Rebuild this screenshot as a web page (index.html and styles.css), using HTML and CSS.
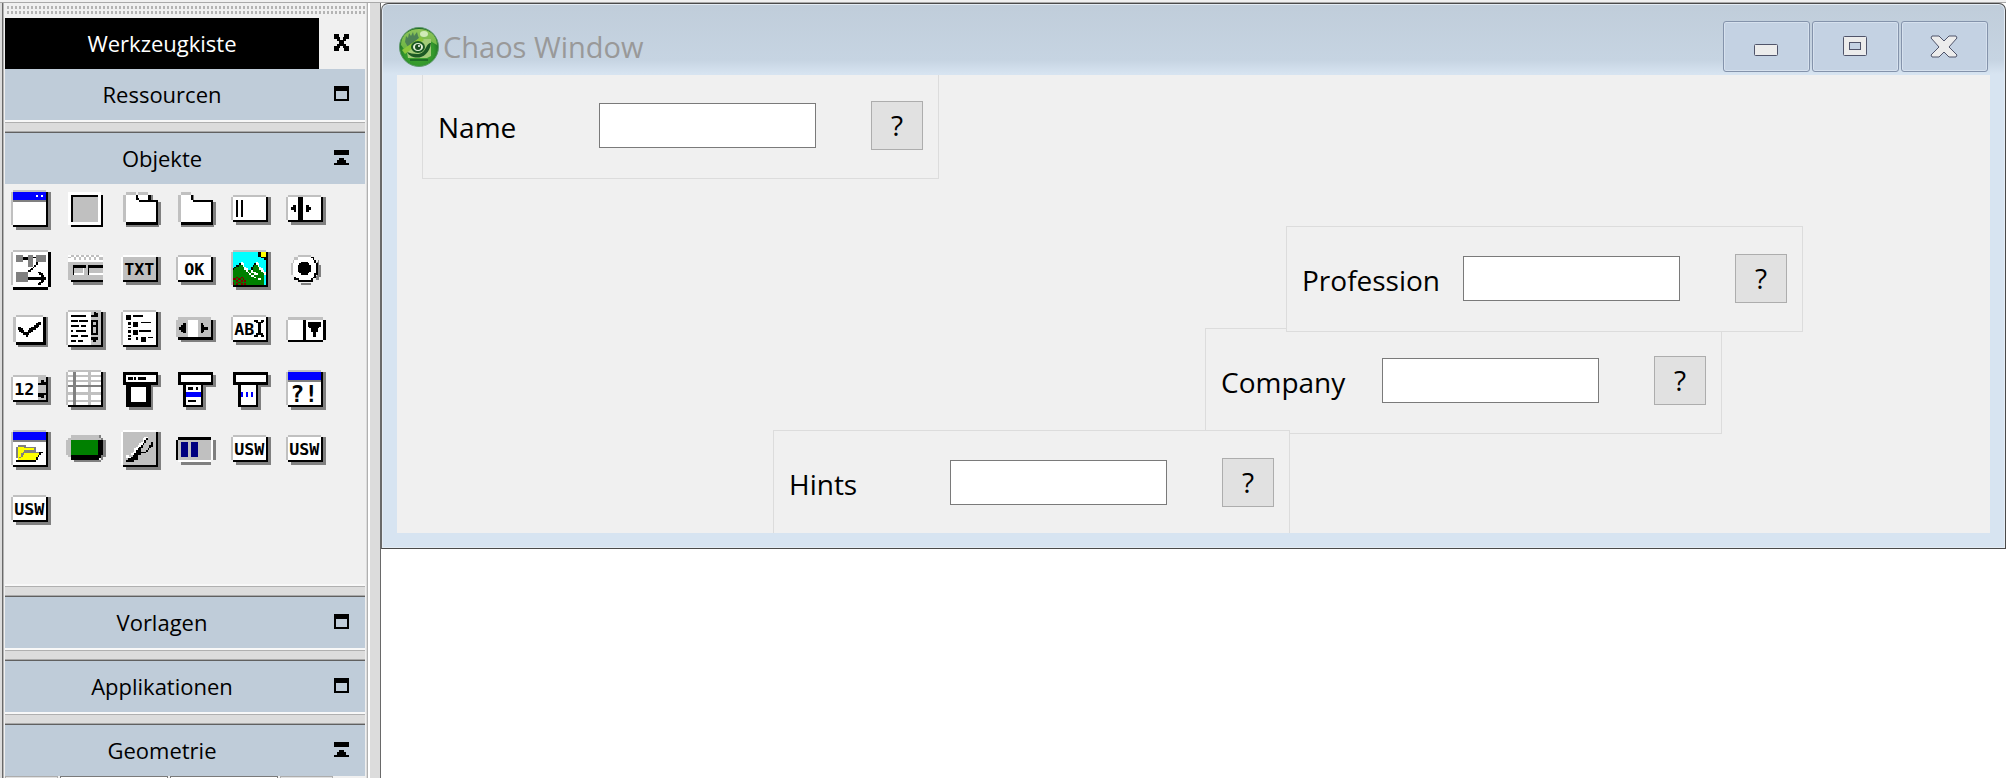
FILE: index.html
```
<!DOCTYPE html>
<html lang="de">
<head>
    <meta charset="UTF-8">
    <meta name="viewport" content="width=device-width, initial-scale=1.0">
    <title>Werkzeugkiste</title>
    <link rel="stylesheet" href="styles.css">
</head>
<body>

    <!-- Shared frames for the tool icons, 24x24 grid -->
    <svg class="sprites" aria-hidden="true">
        <symbol id="frame-square" viewBox="0 0 24 24">
            <path class="silver" d="M1 0h20v1H1zM0 1h1v20H0z"/>
            <path class="white" d="M1 1h20v20H1z"/>
            <path class="black" d="M21 1h1v21H1v-1h20z"/>
            <path class="gray" d="M22 1h2v23H3v-2h19z"/>
        </symbol>
        <symbol id="frame-wide" viewBox="0 0 24 24">
            <path class="silver" d="M1 3h20v1H1zM0 4h1v14H0z"/>
            <path class="white" d="M1 4h20v14H1z"/>
            <path class="black" d="M21 4h1v15H1v-1h20z"/>
            <path class="gray" d="M22 4h2v17H3v-2h19z"/>
        </symbol>
        <symbol id="frame-window" viewBox="0 0 24 24">
            <use href="#frame-square"/>
            <path class="blue" d="M1 1h20v5H1z"/>
            <path class="gray" d="M1 6h20v1H1z"/>
        </symbol>
        <symbol id="mark-open" viewBox="0 0 15 15">
            <path d="M0 0h15v15H0zM2 5v8h11V5z" fill-rule="evenodd"/>
        </symbol>
        <symbol id="mark-fold" viewBox="0 0 15 15">
            <path d="M0 0h15v5H0zM5 8h5v2h2v3h3v2H0v-2h3v-3h2z"/>
        </symbol>
    </svg>

    <div class="topline"></div>

    <div class="workspace">
        <aside class="toolbox">
            <div class="grip"></div>
            <header class="bar bar-main">
                <h1 class="bar-title">Werkzeugkiste</h1>
                <button class="bar-button" aria-label="Schließen">
                    <svg width="15" height="17" viewBox="0 0 15 17"><path d="M0 0h5v3h1v3h3V3h1V0h5v5h-3v2h-2v3h2v2h3v5h-5v-3H9v-2H6v2H5v3H0v-5h3v-2h2V7H3V5H0z"/></svg>
                </button>
            </header>

            <section class="group">
                <header class="bar">
                    <h2 class="bar-title">Ressourcen</h2>
                    <button class="bar-button" aria-label="Ressourcen öffnen"><svg class="mark"><use href="#mark-open"/></svg></button>
                </header>
            </section>
            <div class="splitter"></div>

            <section class="group">
                <header class="bar">
                    <h2 class="bar-title">Objekte</h2>
                    <button class="bar-button" aria-label="Objekte schließen"><svg class="mark"><use href="#mark-fold"/></svg></button>
                </header>
                <div class="tools">
                    <button class="tool" aria-label="Fenster"><svg viewBox="0 0 24 24">
                        <use href="#frame-window"/>
                        <path class="white" d="M15 3h1v1h-1zM18 3h1v1h-1z"/>
                    </svg></button>
                    <button class="tool" aria-label="Gruppe"><svg viewBox="0 0 24 24">
                        <path class="white" d="M1 1h20v20H1z"/>
                        <path class="silver" d="M3 3h16v16H3z"/>
                        <path class="black" d="M3 3h16v1H4v15H3zM21 3h1v19H3v-1h18z"/>
                    </svg></button>
                    <button class="tool" aria-label="Notizbuch"><svg viewBox="0 0 24 24">
                        <path class="silver" d="M3 1h6v2H3zM10 1h6v2h-6zM1 3h2v16H1z"/>
                        <path class="gray" d="M18 3h1v3h-1zM22 7h2v14h-1v1H3v-1h19z"/>
                        <path class="white" d="M3 3h6v2h1V3h6v3h5v13H3z"/>
                        <path class="black" d="M9 3h1v2h1v1H9zM16 3h2v3h4v1H11V6h5zM21 7h1v14H3v-2h18z"/>
                    </svg></button>
                    <button class="tool" aria-label="Notizbuchseite"><svg viewBox="0 0 24 24">
                        <path class="silver" d="M3 1h6v2H3zM1 3h2v16H1z"/>
                        <path class="gray" d="M10 3h1v3h-1zM22 7h2v14h-1v1H3v-1h19z"/>
                        <path class="white" d="M3 3h6v3h12v13H3z"/>
                        <path class="black" d="M9 3h1v3h12v15H3v-2h18V7H10V6H9z"/>
                    </svg></button>
                    <button class="tool" aria-label="Werkzeugleiste"><svg viewBox="0 0 24 24">
                        <use href="#frame-wide"/>
                        <path class="black" d="M3 6h1v10H3zM6 6h1v10H6z"/>
                    </svg></button>
                    <button class="tool" aria-label="Teiler"><svg viewBox="0 0 24 24">
                        <use href="#frame-wide"/>
                        <path class="black" d="M7 4h3v14H7zM3 10h1V9h2v4H5v-1H3zM12 9h2v1h1v2h-1v1h-2z"/>
                    </svg></button>

                    <button class="tool" aria-label="Layout"><svg viewBox="0 0 24 24">
                        <path class="silver" d="M1 0h21v1H1zM0 1h1v20H0z"/>
                        <path class="white" d="M1 1h21v21H1z"/>
                        <path class="black" d="M22 1h2v21h-2zM1 22h21v2H1z"/>
                        <path class="gray" d="M3 3h4v4H3zM10 3h3v7h-3zM15 3h6v4h-6zM3 13h7v6H3z"/>
                        <path class="black" d="M7 4h3v2H7zM13 4h2v1h-2zM15 7h1v2h-1zM14 9h1v1h-1zM13 10h1v1h-1zM12 11h1v1h-1zM11 12h-1v1h2v-2zM10 16h8v-1h-1v-1h-1v-1h2v1h1v1h1v1h1v2h-1v1h-1v1h-1v1h-2v-1h1v-1h1v-1h-8z"/>
                    </svg></button>
                    <button class="tool" aria-label="Toolbar"><svg viewBox="0 0 24 24">
                        <path class="white" d="M1 3h21v4H1z"/>
                        <path class="silver" d="M3 3h2v1H3zM6 3h2v1H6zM9 3h2v1H9zM12 3h2v1h-2zM15 3h2v1h-2zM18 3h2v1h-2zM1 4h2v1H1zM5 4h1v2H5zM8 4h1v2H8zM11 4h1v2h-1zM14 4h1v2h-1zM17 4h1v2h-1zM20 4h2v2h-2zM1 7h21v11H1z"/>
                        <path class="white" d="M5 14h5v-4h1v5H5zM14 14h8v1h-8z"/>
                        <path class="black" d="M4 9h8v1H5v5H4zM13 9h9v1h-8v5h-1zM3 18h19v1H3z"/>
                        <path class="black" d="M4 9h8v2H5v4H4zM13 9h9v2h-8v4h-1z"/>
                        <path class="gray" d="M4 19h18v2H4z"/>
                    </svg></button>
                    <button class="tool" aria-label="Statischer Text"><svg viewBox="0 0 24 24">
                        <use href="#frame-wide"/>
                        <path class="silver" d="M1 4h20v14H1z"/>
                        <path class="white" d="M1 3h20v1H1zM0 4h1v14H0z"/>
                        <text class="glyphs" x="11" y="15">TXT</text>
                    </svg></button>
                    <button class="tool" aria-label="Schaltfläche"><svg viewBox="0 0 24 24">
                        <use href="#frame-wide"/>
                        <text class="glyphs" x="11" y="15">OK</text>
                    </svg></button>
                    <button class="tool" aria-label="Bild"><svg viewBox="0 0 24 24">
                        <use href="#frame-square"/>
                        <path class="cyan" d="M1 1h20v20H1z"/>
                        <path class="green" d="M1 12h1v-1h1v-1h2V8h1v1h2v2h2v1h2v-1h1V9h1V8h2v2h1v1h1v2h2v8H1z"/>
                        <path class="black" d="M16 1h2v3h3v2h-1V5h-2V4h-2zM1 11h1v1H1zM2 10h1v1H2zM3 9h2v1H3zM5 8h1v1H5zM12 10h1v2h-1zM13 9h1v1h-1zM14 8h1v1h-1z"/>
                        <path class="yellow" d="M18 1h3v3h-3z"/>
                        <path class="white" d="M6 7h1v1h1v2h1v1h1v2h1v1h1v1h2v1h1v1h3v1h-2v-1h-2v-1h-2v-1h-1v-1h-1v-1H9v-1H8v-2H7V9H6zM15 7h1v1h1v2h1v1h1v1h1v1h1v2h-1v-1h-1v-1h-1v-1h-1v-2h-1V9h-1zM12 12h1v1h2v1h1v1h-2v-1h-2z"/>
                        <path class="maroon" d="M3 16h1v1H3zM6 16h1v1H6zM1 17h2v1H1zM4 17h2v1H4zM7 17h1v1H7zM3 18h1v1H3zM6 18h1v1H6zM1 19h1v2H1zM4 19h2v1H4zM8 18h1v1H8zM3 20h1v1H3zM6 20h1v1H6zM8 20h1v1H8z"/>
                    </svg></button>
                    <button class="tool" aria-label="Optionsfeld"><svg viewBox="0 0 24 24">
                        <path class="gray" d="M19 6h1v3h1v7h-1v2h-2v2h-3v1H9v-1h9z"/>
                        <path class="silver" d="M7 3h8v1H7zM5 4h2v2H5zM4 6h1v2H4zM3 8h1v7H3z"/>
                        <path class="white" d="M7 4h8v1h2v2h1v1h1v7h-1v2h-2v2H7v-2H5v-2H4V8h1V6h2z"/>
                        <path class="black" d="M15 4h2v2h-1V5h-1zM17 6h1v2h1v7h-1v2h-2v2H7v-1H5v-2h1v1h2v1h7v-1h1v-1h1v-2h1V8h-1z"/>
                        <path class="black" d="M9 7h4v1h1v1h1v4h-1v1h-1v1H9v-1H8v-1H7V9h1V8h1z"/>
                    </svg></button>

                    <button class="tool" aria-label="Ankreuzfeld"><svg viewBox="0 0 24 24">
                        <path class="silver" d="M3 3h16v1H3zM1 4h2v15H1z"/>
                        <path class="white" d="M3 4h16v15H3z"/>
                        <path class="black" d="M19 4h2v17H3v-2h16zM4 10h2v1h1v1h1v1h2v-1h1v-1h1v-1h2V9h1V8h1V7h2v2h-1v1h-1v1h-1v1h-2v1h-1v1h-1v1h-1v1H9v-1H7v-1H6v-1H5v-1H4z"/>
                        <path class="gray" d="M21 4h1v18H4v-1h17z"/>
                    </svg></button>
                    <button class="tool" aria-label="Mehrzeiliger Text"><svg viewBox="0 0 24 24">
                        <use href="#frame-square"/>
                        <path class="silver" d="M15 1h6v20h-6z"/>
                        <path class="black" d="M3 3h9v1H3zM3 6h4v1H3zM8 6h5v1H8zM3 9h5v1H3zM9 9h3v1H9zM3 12h1v1H3zM6 12h6v1H6zM3 15h4v1H3zM9 15h4v1H9zM3 18h3v1H3zM7 18h3v1H7z"/>
                        <path class="black" d="M17 1h1v1h1v2h-4V3h2zM15 6h4v9h-4zM16 7v2h2V7zM16 10v4h2v-4zM15 16h4v2h-1v1h-2v-1h-1z" fill-rule="evenodd"/>
                    </svg></button>
                    <button class="tool" aria-label="Baumansicht"><svg viewBox="0 0 24 24">
                        <use href="#frame-square"/>
                        <path class="black" d="M3 3h3v3H3zM7 3h6v1H7zM4 7h2v2H4zM7 7h3v3H7zM12 7h6v1h-6zM4 10h2v1H4zM4 12h2v2H4zM7 12h3v3H7zM11 12h7v1h-7zM4 15h2v1H4zM4 17h2v1H4zM9 16h1v2H9zM12 16h3v3h-3zM16 16h3v1h-3z"/>
                    </svg></button>
                    <button class="tool" aria-label="Bildlaufleiste"><svg viewBox="0 0 24 24">
                        <path class="gray" d="M22 6h2v13H3v-1h19z"/>
                        <path class="silver" d="M1 4h20v2h1v10H0V6h1z"/>
                        <path class="white" d="M7 6h6v10H7z"/>
                        <path class="black" d="M21 6h1v12H1v-2h20zM2 10h1V9h1V8h2v6H4v-1H3v-1H2zM15 8h1v1h1v1h2v2h-2v1h-1v1h-1z"/>
                    </svg></button>
                    <button class="tool" aria-label="Editierbarer Text"><svg viewBox="0 0 24 24">
                        <use href="#frame-wide"/>
                        <text class="glyphs" x="8" y="15">AB</text>
                        <path class="black" d="M14 6h2v1h2V6h2v1h-1v1h-1v6h1v1h1v1h-2v-1h-2v1h-2v-1h1v-1h1V8h-1V7h-1z"/>
                    </svg></button>
                    <button class="tool" aria-label="Poptext"><svg viewBox="0 0 24 24">
                        <path class="silver" d="M1 4h21v2H1zM0 6h1v12H0z"/>
                        <path class="white" d="M1 6h21v12H1z"/>
                        <path class="black" d="M10 6h2v12h-2zM22 6h2v12h-2zM1 18h21v1H1zM13 7h8v3h-1v1h-1v2h-1v3h-2v-3h-1v-2h-1v-1h-1z"/>
                    </svg></button>

                    <button class="tool" aria-label="Spinbox"><svg viewBox="0 0 24 24">
                        <use href="#frame-wide"/>
                        <path class="silver" d="M16 4h5v14h-5z"/>
                        <path class="black" d="M18 6h2v1h2v2h-6V8h2zM16 14h6v1h-2v2h-2v-1h-2zM21 4h1v15h-1z"/>
                        <text class="glyphs" x="8" y="15">12</text>
                    </svg></button>
                    <button class="tool" aria-label="Tabelle"><svg viewBox="0 0 24 24">
                        <use href="#frame-square"/>
                        <path class="silver" d="M1 3h20v1H1zM1 6h20v1H1zM1 13h20v2H1zM1 18h20v1H1zM13 1h2v20h-2z"/>
                        <path class="gray" d="M4 1h2v20H4zM1 9h20v1H1z"/>
                    </svg></button>
                    <button class="tool" aria-label="Menüleiste"><svg viewBox="0 0 24 24">
                        <path class="gray" d="M22 3h2v7H22zM18 9h5v1h-4v14H5v-2h13z"/>
                        <path class="black" d="M1 1h21v8h-4v13H3V9H1z"/>
                        <path class="white" d="M3 3h18v4H3zM6 10h9v9H6z"/>
                        <path class="black" d="M4 4h3v2H4zM8 4h1v2H8zM10 4h5v2h-5z"/>
                    </svg></button>
                    <button class="tool" aria-label="Menü"><svg viewBox="0 0 24 24">
                        <path class="gray" d="M22 3h2v7H22zM16 9h7v1h-5v14H6v-2h10z"/>
                        <path class="black" d="M1 1h21v8h-6v13H4V9H1z"/>
                        <path class="white" d="M3 3h18v4H3zM6 9h9v12H6z"/>
                        <path class="blue" d="M6 13h9v3H6z"/>
                        <path class="black" d="M7 10h3v2H7zM12 10h1v2h-1zM7 18h5v1H7z"/>
                    </svg></button>
                    <button class="tool" aria-label="Menüeintrag"><svg viewBox="0 0 24 24">
                        <path class="gray" d="M22 3h2v7H22zM16 9h7v1h-5v14H6v-2h10z"/>
                        <path class="black" d="M1 1h21v8h-6v13H4V9H1z"/>
                        <path class="white" d="M3 3h18v4H3zM6 9h9v12H6z"/>
                        <path class="blue" d="M6 13h1v3H6zM9 13h1v3H9zM12 13h1v3h-1z"/>
                    </svg></button>
                    <button class="tool" aria-label="Meldungsfenster"><svg viewBox="0 0 24 24">
                        <use href="#frame-window"/>
                        <text class="glyphs glyphs-large" x="11" y="19">?!</text>
                    </svg></button>

                    <button class="tool" aria-label="Dateiauswahl"><svg viewBox="0 0 24 24">
                        <use href="#frame-window"/>
                        <path class="gray" d="M4 9h5v1h6v3h4v1h-1v1h-1v1h-1v1h-1v1H5v-1H3v-7h1z"/>
                        <path class="yellow" d="M4 10h4v1h6v1H8v1H7v1H6v2H5v1H4zM8 14h9v1h-1v1h-1v2H4v-1h2v-1h1v-1h1z"/>
                        <path class="black" d="M17 13h2v1h-1v1h-1v1h-1v2h-1v1H3v-1h12v-2h1v-1h1z"/>
                    </svg></button>
                    <button class="tool" aria-label="Leinwand"><svg viewBox="0 0 24 24">
                        <path class="gray" d="M20 3h1v2h1v1h2v10h-2v2h-1v1H5v-1h16z"/>
                        <path class="silver" d="M3 3h17v2h1v1H3v10H1v-1H0V6h1V5h2z"/>
                        <path class="green" d="M3 6h16v9H3z"/>
                        <path class="black" d="M19 6h3v9h-1v2h-1v1H3v-3h16z"/>
                    </svg></button>
                    <button class="tool" aria-label="Pinsel"><svg viewBox="0 0 24 24">
                        <use href="#frame-square"/>
                        <path class="silver" d="M1 1h20v20H1z"/>
                        <path class="white" d="M1 0h20v1H1zM0 1h1v20H0zM14 4h2v1h-1v2h-1v1h-1v1h-1v1h-1v1h-1v1H9v2H8v1H5v1h2v1H3v-2h3v-1h1v-1h1v-2h1v-1h1V9h1V8h1V7h1V5h1z"/>
                        <path class="black" d="M15 5h1v1h-1v2h-1v1h-1v2h-1v2h3v-1h1v-1h1V9h1V7h1v3h-1v1h-1v1h-1v1h-1v1h-3v1h-2v3H8v1H3v-1h1v-1h2v-1h1v-1h1v-1h1v-2h1v-1h1v-1h1V9h1V8h1V6h1z"/>
                    </svg></button>
                    <button class="tool" aria-label="Fortschrittsbalken"><svg viewBox="0 0 24 24">
                        <path class="gray" d="M22 6h2v12h-2zM3 19h18v2H3z"/>
                        <path class="silver" d="M1 5h20v13H1z"/>
                        <path class="black" d="M1 4h20v2H1v12H0V6h1z"/>
                        <path class="white" d="M21 6h1v12h-1v1H1v-1h20z"/>
                        <path class="navy" d="M3 7h4v9H3zM9 7h4v9H9z"/>
                    </svg></button>
                    <button class="tool" aria-label="Benutzerobjekt 1"><svg viewBox="0 0 24 24">
                        <use href="#frame-wide"/>
                        <text class="glyphs" x="11" y="15">USW</text>
                    </svg></button>
                    <button class="tool" aria-label="Benutzerobjekt 2"><svg viewBox="0 0 24 24">
                        <use href="#frame-wide"/>
                        <text class="glyphs" x="11" y="15">USW</text>
                    </svg></button>
                    <button class="tool" aria-label="Benutzerobjekt 3"><svg viewBox="0 0 24 24">
                        <use href="#frame-wide"/>
                        <text class="glyphs" x="11" y="15">USW</text>
                    </svg></button>
                </div>
            </section>
            <div class="splitter"></div>

            <section class="group">
                <header class="bar">
                    <h2 class="bar-title">Vorlagen</h2>
                    <button class="bar-button" aria-label="Vorlagen öffnen"><svg class="mark"><use href="#mark-open"/></svg></button>
                </header>
            </section>
            <div class="splitter"></div>

            <section class="group">
                <header class="bar">
                    <h2 class="bar-title">Applikationen</h2>
                    <button class="bar-button" aria-label="Applikationen öffnen"><svg class="mark"><use href="#mark-open"/></svg></button>
                </header>
            </section>
            <div class="splitter"></div>

            <section class="group">
                <header class="bar">
                    <h2 class="bar-title">Geometrie</h2>
                    <button class="bar-button" aria-label="Geometrie schließen"><svg class="mark"><use href="#mark-fold"/></svg></button>
                </header>
                <div class="geometry">
                    <button class="step" aria-label="Kleiner"></button>
                    <input class="measure" type="text" aria-label="X">
                    <input class="measure" type="text" aria-label="Y">
                    <button class="step" aria-label="Größer"></button>
                </div>
            </section>
        </aside>

        <main class="desktop">
            <div class="window">
                <header class="titlebar">
                    <svg class="logo" viewBox="0 0 40 40" aria-hidden="true">
                        <defs>
                            <radialGradient id="ball" cx="50%" cy="60%" r="55%">
                                <stop offset="0" stop-color="#4aa832"/>
                                <stop offset="0.7" stop-color="#33982c"/>
                                <stop offset="1" stop-color="#1f6a24"/>
                            </radialGradient>
                            <linearGradient id="shine" x1="0" y1="0" x2="0" y2="1">
                                <stop offset="0" stop-color="#8fc45a"/>
                                <stop offset="1" stop-color="#6cb644"/>
                            </linearGradient>
                        </defs>
                        <circle cx="20" cy="20" r="19.5" fill="url(#ball)" stroke="#5f9a6c"/>
                        <path d="M2 18C2 8 10 2 20 2s18 6 18 16c-5-3-8-5-12-6L5 22z" fill="url(#shine)"/>
                        <path d="M22 12h10v17l-4 2H9l-1-6z" fill="#a3cc78"/>
                        <path d="M6 15l1-6 2 2 1-5 2 3 2-4 1 4 3-4 1 4 1 2-11 9z" fill="#4d8254"/>
                        <path d="M3 23L22 10l3 3L6 27z" fill="#8cc63c"/>
                        <path d="M8 25c5 9 22 8 24-9-6 0-4 11-14 11-4 0-7-1-10-2z" fill="#1c5a24"/>
                        <ellipse cx="19" cy="20" rx="6" ry="5" fill="#e5f2d8" stroke="#1c5a24" stroke-width="2"/>
                        <circle cx="19" cy="20" r="3" fill="#1a4d20"/>
                        <circle cx="20" cy="19" r="1" fill="#fff"/>
                        <ellipse cx="25" cy="7" rx="4" ry="3" fill="#e3f5cf" opacity="0.8"/>
                        <path d="M11 33h18" stroke="#1f6e26" stroke-width="2"/>
                    </svg>
                    <span class="window-title">Chaos Window</span>
                    <div class="window-buttons">
                        <button class="window-button" aria-label="Minimieren">
                            <svg width="26" height="24" viewBox="0 0 26 24"><rect class="sign" x="1.5" y="9.5" width="23" height="11" rx="1"/></svg>
                        </button>
                        <button class="window-button" aria-label="Maximieren">
                            <svg width="26" height="24" viewBox="0 0 26 24"><rect class="sign" x="1.5" y="1.5" width="23" height="19" rx="1"/><rect class="sign-hole" x="7.5" y="7.5" width="11" height="7"/></svg>
                        </button>
                        <button class="window-button" aria-label="Fenster schließen">
                            <svg width="28" height="24" viewBox="0 0 28 24"><path class="sign" d="M2 1h7l5 5 5-5h7l1 2-8 9 8 8-1 2h-7l-5-5-5 5H2l-1-2 8-8-8-9z"/></svg>
                        </button>
                    </div>
                </header>

                <div class="client">
                    <div class="panel panel-name">
                        <label class="panel-label" for="name">Name</label>
                        <input class="panel-input" id="name" type="text">
                        <button class="panel-help">?</button>
                    </div>
                    <div class="panel panel-company">
                        <label class="panel-label" for="company">Company</label>
                        <input class="panel-input" id="company" type="text">
                        <button class="panel-help">?</button>
                    </div>
                    <div class="panel panel-profession">
                        <label class="panel-label" for="profession">Profession</label>
                        <input class="panel-input" id="profession" type="text">
                        <button class="panel-help">?</button>
                    </div>
                    <div class="panel panel-hints">
                        <label class="panel-label" for="hints">Hints</label>
                        <input class="panel-input" id="hints" type="text">
                        <button class="panel-help">?</button>
                    </div>
                </div>
            </div>
        </main>
    </div>

</body>
</html>
```
FILE: styles.css
```
/* Global Styles */
* {
    margin: 0;
    padding: 0;
    box-sizing: border-box;
}

body {
    display: flex;
    flex-direction: column;
    height: 100vh;
    overflow: hidden;
    background-color: #fff;
    color: #000;
    font-family: "Segoe UI", "Open Sans", sans-serif;
}

button,
input {
    font: inherit;
    color: inherit;
    border: none;
    border-radius: 0;
}

button {
    background: none;
}

svg {
    display: block;
}

.sprites {
    position: absolute;
    width: 0;
    height: 0;
}

.topline {
    flex: none;
    height: 3px;
    background-color: #f0f0f0;
    border-bottom: 1px solid #a9a9a9;
}

.workspace {
    display: flex;
    flex: 1;
    min-height: 0;
}

/* Toolbox */
.toolbox {
    flex: none;
    width: 381px;
    padding: 3px 16px 0 5px;
    overflow: hidden;
    background: linear-gradient(to right,
        #dcdcdc 2px, #696969 2px, #696969 3px, #b4b4b4 3px, #b4b4b4 4px,
        #f0f0f0 4px, #f0f0f0 366px, #dcdcdc 366px, #dcdcdc 367px,
        #b0b0b0 367px, #b0b0b0 368px, #fff 368px, #fff 370px,
        #dcdcdc 370px, #dcdcdc 380px, #696969 380px);
}

.grip {
    height: 10px;
    margin-bottom: 2px;
    background: conic-gradient(from 90deg at 2px 3px, transparent 270deg, #b4b4b4 270deg) 0 0 / 4px 5px;
}

.bar {
    display: flex;
    height: 51px;
    background-color: #bfccd9;
}

.bar-main {
    background-color: #f0f0f0;
}

.bar-main .bar-title {
    background-color: #000;
    color: #fff;
}

.bar-title {
    flex: 1;
    font-size: 22px;
    font-weight: 400;
    line-height: 50px;
    text-align: center;
}

.bar-button {
    display: flex;
    justify-content: center;
    align-items: center;
    width: 46px;
    padding: 0 2px 2px 0;
}

.mark {
    width: 15px;
    height: 15px;
}

.splitter {
    height: 13px;
    background: linear-gradient(#f8f8f8 2px, #b0b0b0 2px, #b0b0b0 3px,
        #dcdcdc 3px, #dcdcdc 11px, #a9a9a9 11px, #a9a9a9 12px, #606060 12px);
}

/* Object icons */
.tools {
    display: grid;
    grid-template-columns: repeat(auto-fill, 40px);
    gap: 20px 15px;
    padding: 6px 32px 54px 6px;
}

.tools + .splitter {
    height: 12px;
}

.tool {
    height: 40px;
}

.tool svg {
    width: 40px;
    height: 40px;
    shape-rendering: crispEdges;
}

.black { fill: #000; }
.white { fill: #fff; }
.silver { fill: #c0c0c0; }
.gray { fill: #808080; }
.blue { fill: #00f; }
.navy { fill: #000080; }
.green { fill: #008000; }
.cyan { fill: #0ff; }
.yellow { fill: #ff0; }
.maroon { fill: #800000; }

.glyphs {
    font-family: "DejaVu Sans Mono", monospace;
    font-size: 10px;
    font-weight: 700;
    text-anchor: middle;
}

.glyphs-large {
    font-size: 14px;
}

/* Geometry fields */
.geometry {
    display: flex;
    gap: 2px;
}

.step {
    width: 53px;
    height: 40px;
    background-color: #e1e1e1;
    border: 1px solid #adadad;
}

.measure {
    width: 108px;
    height: 40px;
    background-color: #fff;
    border: 1px solid #7a7a7a;
}

/* Window */
.desktop {
    flex: 1;
    min-width: 0;
}

.window {
    padding: 0 15px 15px;
    background: linear-gradient(#c0cdda, #c6d4e2 56px, #d7e4f1 70px);
    border: 1px solid #4a4a4a;
    border-left-color: #696969;
    border-radius: 7px 7px 0 0;
    box-shadow: inset 0 0 0 1px #e4ecf4;
}

.titlebar {
    display: flex;
    align-items: center;
    height: 71px;
    padding: 0 2px;
}

.logo {
    width: 40px;
    height: 40px;
    margin-top: 14px;
}

.window-title {
    flex: 1;
    padding: 15px 0 0 4px;
    font-size: 29px;
    line-height: 36px;
    color: #999;
}

.window-buttons {
    display: flex;
    gap: 2px;
    padding-top: 14px;
}

.window-button {
    display: flex;
    justify-content: center;
    align-items: center;
    width: 87px;
    height: 51px;
    border: 1px solid #8493ab;
    border-radius: 3px;
    background-color: #c4d2e3;
    box-shadow: inset 0 0 0 1px #d6e1ee;
}

.window-button svg {
    margin-right: 2px;
}

.sign {
    fill: #ececec;
    stroke: #50546a;
}

.sign-hole {
    fill: #c4d2e3;
    stroke: #50546a;
}

.client {
    position: relative;
    height: 458px;
    overflow: hidden;
    background-color: #f0f0f0;
}

/* Panels are placed freely on the client area */
.panel {
    position: absolute;
    display: grid;
    grid-template-columns: 161px 1fr 52px;
    align-items: center;
    width: 517px;
    height: 106px;
    padding: 0 15px 2px;
    background-color: #f0f0f0;
    border: 1px solid #dcdcdc;
}

.panel-name {
    left: 25px;
    top: -2px;
}

.panel-company {
    left: 808px;
    top: 253px;
}

.panel-profession {
    left: 889px;
    top: 151px;
}

.panel-hints {
    left: 376px;
    top: 355px;
}

.panel-label {
    padding-top: 4px;
    font-size: 28px;
    line-height: 40px;
}

.panel-input {
    width: 217px;
    height: 45px;
    padding: 0 6px;
    font-size: 28px;
    background-color: #fff;
    border: 1px solid #7a7a7a;
}

.panel-help {
    width: 52px;
    height: 49px;
    font-size: 28px;
    background-color: #e1e1e1;
    border: 1px solid #adadad;
}
```
